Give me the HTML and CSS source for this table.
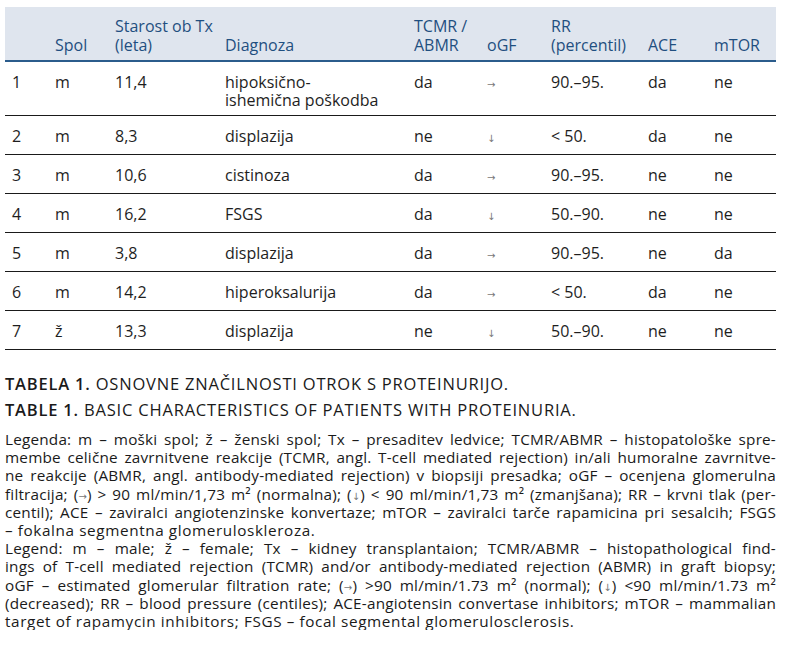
FILE: index.html
```html
<!DOCTYPE html>
<html lang="sl">
<head>
<meta charset="utf-8">
<title>Tabela 1</title>
<link rel="stylesheet" href="styles.css">
</head>
<body>
<div class="page">
  <table class="tbl">
    <colgroup>
      <col class="w-num"><col class="w-spol"><col class="w-age"><col class="w-diag"><col class="w-tcmr"><col class="w-ogf"><col class="w-rr"><col class="w-ace"><col class="w-mtor">
    </colgroup>
    <thead>
      <tr>
        <th></th><th>Spol</th><th>Starost ob Tx<br>(leta)</th><th>Diagnoza</th><th>TCMR /<br>ABMR</th><th>oGF</th><th>RR<br>(percentil)</th><th>ACE</th><th>mTOR</th>
      </tr>
    </thead>
    <tbody>
      <tr class="first"><td>1</td><td>m</td><td>11,4</td><td>hipoksično-<br>ishemična poškodba</td><td>da</td><td><span class="arr">→</span></td><td>90.–95.</td><td>da</td><td>ne</td></tr>
      <tr><td>2</td><td>m</td><td>8,3</td><td>displazija</td><td>ne</td><td><span class="arr">↓</span></td><td>&lt; 50.</td><td>da</td><td>ne</td></tr>
      <tr><td>3</td><td>m</td><td>10,6</td><td>cistinoza</td><td>da</td><td><span class="arr">→</span></td><td>90.–95.</td><td>ne</td><td>ne</td></tr>
      <tr><td>4</td><td>m</td><td>16,2</td><td>FSGS</td><td>da</td><td><span class="arr">↓</span></td><td>50.–90.</td><td>ne</td><td>ne</td></tr>
      <tr><td>5</td><td>m</td><td>3,8</td><td>displazija</td><td>da</td><td><span class="arr">→</span></td><td>90.–95.</td><td>ne</td><td>da</td></tr>
      <tr><td>6</td><td>m</td><td>14,2</td><td>hiperoksalurija</td><td>da</td><td><span class="arr">→</span></td><td>&lt; 50.</td><td>da</td><td>ne</td></tr>
      <tr><td>7</td><td>ž</td><td>13,3</td><td>displazija</td><td>ne</td><td><span class="arr">↓</span></td><td>50.–90.</td><td>ne</td><td>ne</td></tr>
    </tbody>
  </table>

  <p class="caption cap-first"><b>TABELA 1.</b> OSNOVNE ZNAČILNOSTI OTROK S PROTEINURIJO.</p>
  <p class="caption"><b>TABLE 1.</b> BASIC CHARACTERISTICS OF PATIENTS WITH PROTEINURIA.</p>

  <div class="legend">
    <span class="ln">Legenda: m – moški spol; ž – ženski spol; Tx – presaditev ledvice; TCMR/ABMR – histopatološke spre-</span>
    <span class="ln">membe celične zavrnitvene reakcije (TCMR, angl. T-cell mediated rejection) in/ali humoralne zavrnitve-</span>
    <span class="ln">ne reakcije (ABMR, angl. antibody-mediated rejection) v biopsiji presadka; oGF – ocenjena glomerulna</span>
    <span class="ln">filtracija; (<span class="arr">→</span>) &gt; 90 ml/min/1,73 m² (normalna); (<span class="arr">↓</span>) &lt; 90 ml/min/1,73 m² (zmanjšana); RR – krvni tlak (per-</span>
    <span class="ln">centil); ACE – zaviralci angiotenzinske konvertaze; mTOR – zaviralci tarče rapamicina pri sesalcih; FSGS</span>
    <span class="ln last">– fokalna segmentna glomeruloskleroza.</span>
    <span class="ln">Legend: m – male; ž – female; Tx – kidney transplantaion; TCMR/ABMR – histopathological find-</span>
    <span class="ln">ings of T-cell mediated rejection (TCMR) and/or antibody-mediated rejection (ABMR) in graft biopsy;</span>
    <span class="ln">oGF – estimated glomerular filtration rate; (<span class="arr">→</span>) &gt;90 ml/min/1.73 m² (normal); (<span class="arr">↓</span>) &lt;90 ml/min/1.73 m²</span>
    <span class="ln">(decreased); RR – blood pressure (centiles); ACE-angiotensin convertase inhibitors; mTOR – mammalian</span>
    <span class="ln last">target of rapamycin inhibitors; FSGS – focal segmental glomerulosclerosis.</span>
  </div>
</div>
</body>
</html>
```

FILE: styles.css
```css
html, body {
  margin: 0;
  padding: 0;
  background: #ffffff;
}

.page {
  padding: 7px 10px 0 5px;
  font-family: "Open Sans", "Noto Sans", sans-serif;
  color: #1e1e1e;
}

.tbl {
  border-collapse: collapse;
  table-layout: fixed;
  width: 771px;
  font-size: 16px;
}

.w-num { width: 43px; }
.w-spol { width: 60px; }
.w-age { width: 110px; }
.w-diag { width: 189px; }
.w-tcmr { width: 73px; }
.w-ogf { width: 64px; }
.w-rr { width: 97px; }
.w-ace { width: 66px; }
.w-mtor { width: 69px; }

.tbl th {
  background: #dfe5ee;
  color: #1f4f80;
  font-weight: normal;
  text-align: left;
  vertical-align: bottom;
  white-space: nowrap;
  line-height: 19px;
  height: 41px;
  padding: 7px 7px 5px;
  border-bottom: 2px solid #2b5c8c;
}

.tbl td {
  text-align: left;
  vertical-align: top;
  line-height: 18px;
  padding: 11px 7px 9px;
  border-bottom: 1px solid #1a1a1a;
}

.tbl tr.first td {
  padding-bottom: 6px;
}

.arr {
  color: #777777;
  font-size: 10px;
  line-height: 1;
  font-family: "DejaVu Sans", sans-serif;
}

.caption {
  margin: 0;
  font-size: 16.5px;
  line-height: 26px;
  letter-spacing: 0.8px;
  color: #1a1a1a;
}

.cap-first {
  margin-top: 21px;
}

.caption b {
  font-weight: 600;
}

.legend {
  margin-top: 7px;
  font-size: 15.3px;
  line-height: 18.2px;
  letter-spacing: 0.2px;
  width: 771px;
  color: #1a1a1a;
}

.ln {
  display: block;
  white-space: nowrap;
  text-align: justify;
  text-align-last: justify;
}

.ln.last {
  text-align-last: left;
  letter-spacing: 0.6px;
}
```
